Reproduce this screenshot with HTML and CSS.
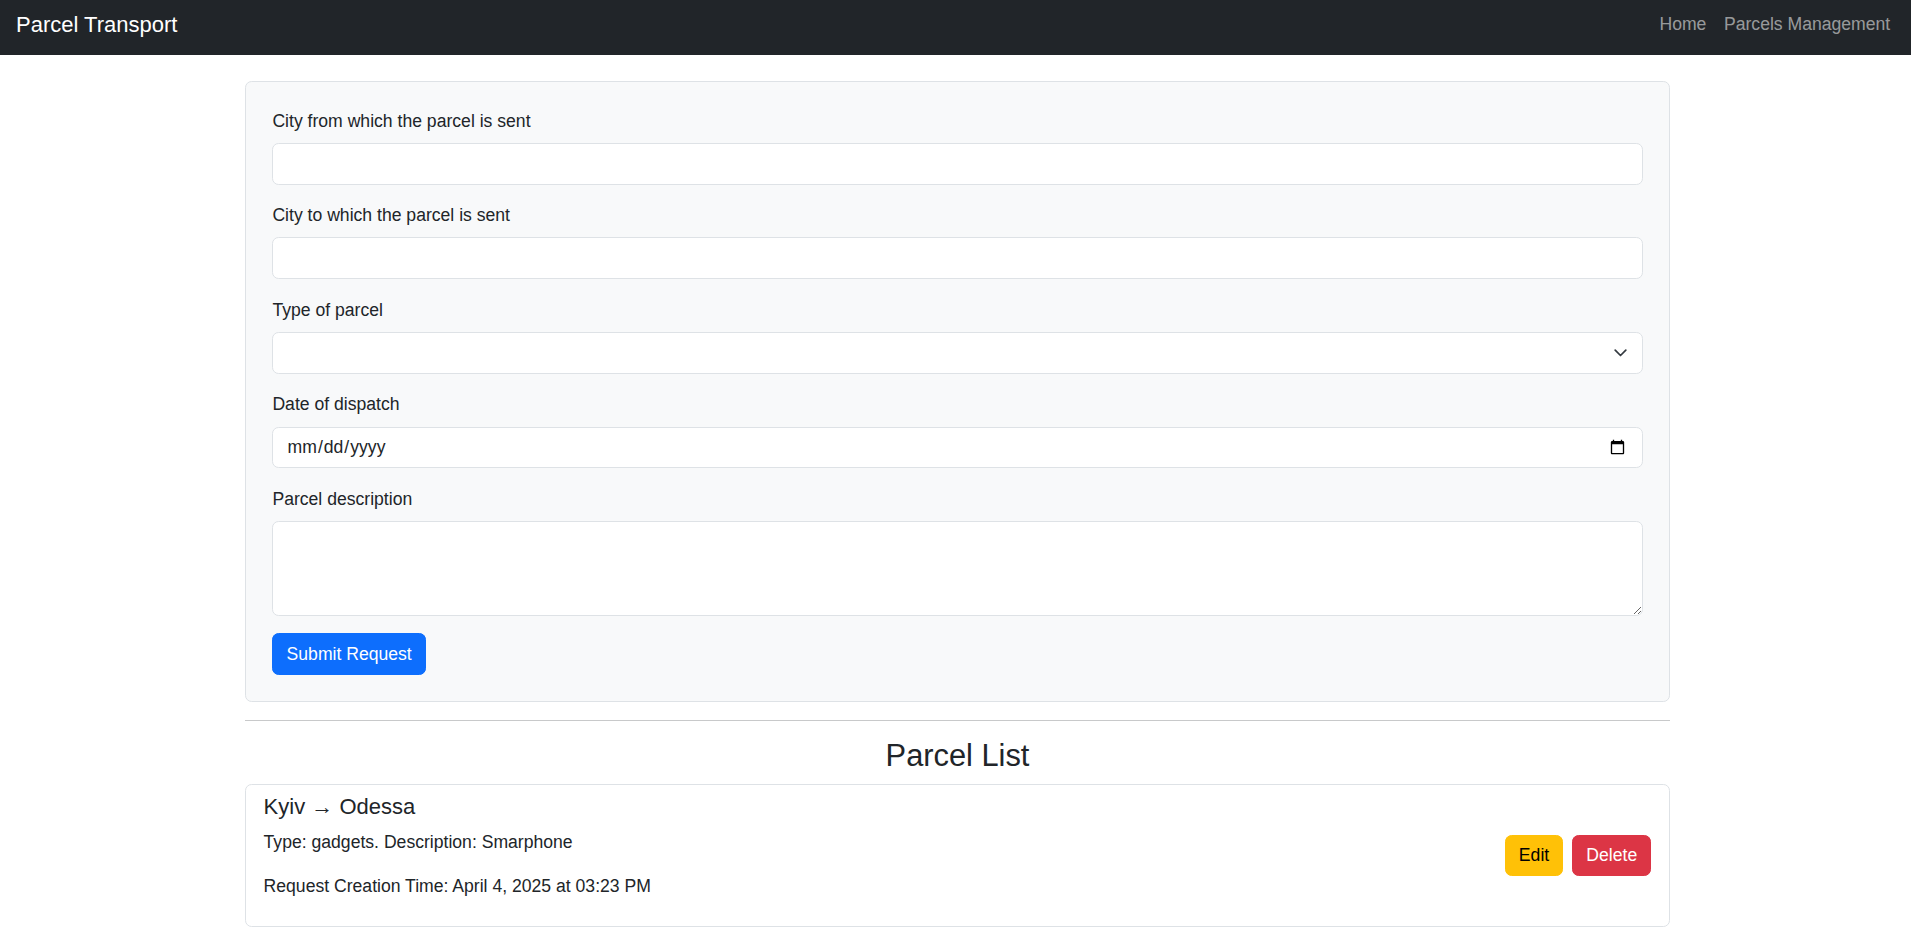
FILE: index.html
```html
<!DOCTYPE html>
<html lang="en">
<head>
<meta charset="utf-8">
<title>Parcel Transport</title>
<link rel="stylesheet" href="styles.css">
</head>
<body>
<nav class="navbar">
  <a class="brand" href="#">Parcel Transport</a>
  <ul class="nav-links">
    <li><a href="#">Home</a></li>
    <li><a href="#">Parcels Management</a></li>
  </ul>
</nav>
<main class="container">
  <form class="form-card">
    <div class="field">
      <label class="label" for="from">City from which the parcel is sent</label>
      <input class="control" id="from" type="text">
    </div>
    <div class="field">
      <label class="label" for="to">City to which the parcel is sent</label>
      <input class="control" id="to" type="text">
    </div>
    <div class="field">
      <label class="label" for="type">Type of parcel</label>
      <div class="select-wrap">
        <select class="control select" id="type"><option></option></select>
        <svg class="chevron" viewBox="0 0 13 8" width="13" height="8"><path d="M1.2 1.2l5.3 5.3 5.3-5.3" fill="none" stroke="#343a40" stroke-width="1.7" stroke-linecap="round" stroke-linejoin="round"/></svg>
      </div>
    </div>
    <div class="field">
      <label class="label" for="date">Date of dispatch</label>
      <input class="control" id="date" type="date">
    </div>
    <div class="field">
      <label class="label" for="desc">Parcel description</label>
      <textarea class="control textarea" id="desc" rows="3"></textarea>
    </div>
    <button class="btn btn-primary" type="button">Submit Request</button>
  </form>
  <hr class="divider">
  <h3 class="list-title">Parcel List</h3>
  <div class="parcel-card">
    <div class="parcel-info">
      <h5 class="parcel-route">Kyiv → Odessa</h5>
      <p class="parcel-text">Type: gadgets. Description: Smarphone</p>
      <p class="parcel-text">Request Creation Time: April 4, 2025 at 03:23 PM</p>
    </div>
    <div class="parcel-actions">
      <button class="btn btn-warning" type="button">Edit</button>
      <button class="btn btn-danger" type="button">Delete</button>
    </div>
  </div>
</main>
</body>
</html>
```

FILE: styles.css
```css
* { box-sizing: border-box; }
html, body { margin: 0; padding: 0; }
body {
  font-family: "Liberation Sans", Arial, sans-serif;
  font-size: 17.6px;
  line-height: 26.4px;
  color: #212529;
  background: #fff;
}
.navbar {
  height: 55px;
  background: #212529;
  display: flex;
  justify-content: space-between;
  align-items: flex-start;
  padding: 0 12px 0 16px;
}
.brand {
  margin-top: 7.5px;
  font-size: 22px;
  line-height: 33px;
  color: #fff;
  text-decoration: none;
}
.nav-links {
  list-style: none;
  margin: 10.5px 0 0;
  padding: 0;
  display: flex;
}
.nav-links a {
  display: block;
  padding: 0 8.8px;
  color: rgba(255,255,255,0.55);
  text-decoration: none;
}
.container {
  width: 1425px;
  margin: 0 auto;
  padding-top: 26px;
  position: relative;
  left: 2px;
}
.form-card {
  background: #f8f9fa;
  border: 1px solid #dee2e6;
  border-radius: 6.6px;
  padding: 25.6px 26.4px 26.4px;
}
.field { margin-bottom: 17.6px; }
.label {
  display: block;
  margin-bottom: 8.8px;
}
.control {
  display: block;
  width: 100%;
  height: 41.8px;
  padding: 6.6px 13.2px;
  font-family: inherit;
  font-size: 17.6px;
  line-height: 26.4px;
  color: #212529;
  background: #fff;
  border: 1px solid #dee2e6;
  border-radius: 6.6px;
  outline: none;
}
.select-wrap { position: relative; }
.select {
  appearance: none;
  -webkit-appearance: none;
  padding-right: 44px;
}
.chevron {
  position: absolute;
  right: 16px;
  top: 50%;
  transform: translateY(-50%);
  pointer-events: none;
}
.textarea {
  height: 94.4px;
  resize: vertical;
}
.btn {
  display: inline-block;
  padding: 6.6px 13.2px;
  font-family: inherit;
  font-size: 17.6px;
  line-height: 26.4px;
  border: 1px solid transparent;
  border-radius: 6.6px;
  cursor: pointer;
}
.btn-primary { background: #0d6efd; border-color: #0d6efd; color: #fff; }
.btn-warning { background: #ffc107; border-color: #ffc107; color: #000; }
.btn-danger { background: #dc3545; border-color: #dc3545; color: #fff; }
.divider {
  margin: 17.6px 0;
  border: 0;
  border-top: 1px solid #c8c9ca;
}
.list-title {
  margin: 0 0 8.8px;
  text-align: center;
  font-size: 30.8px;
  line-height: 36.96px;
  font-weight: 500;
}
.parcel-card {
  border: 1px solid #dee2e6;
  border-radius: 6.6px;
  padding: 8.8px 17.6px;
  display: flex;
  justify-content: space-between;
  align-items: center;
}
.parcel-route {
  margin: 0 0 8.8px;
  font-size: 22px;
  line-height: 26.4px;
  font-weight: 500;
}
.parcel-text { margin: 0 0 17.6px; }
.parcel-actions { display: flex; gap: 8.8px; }
```
